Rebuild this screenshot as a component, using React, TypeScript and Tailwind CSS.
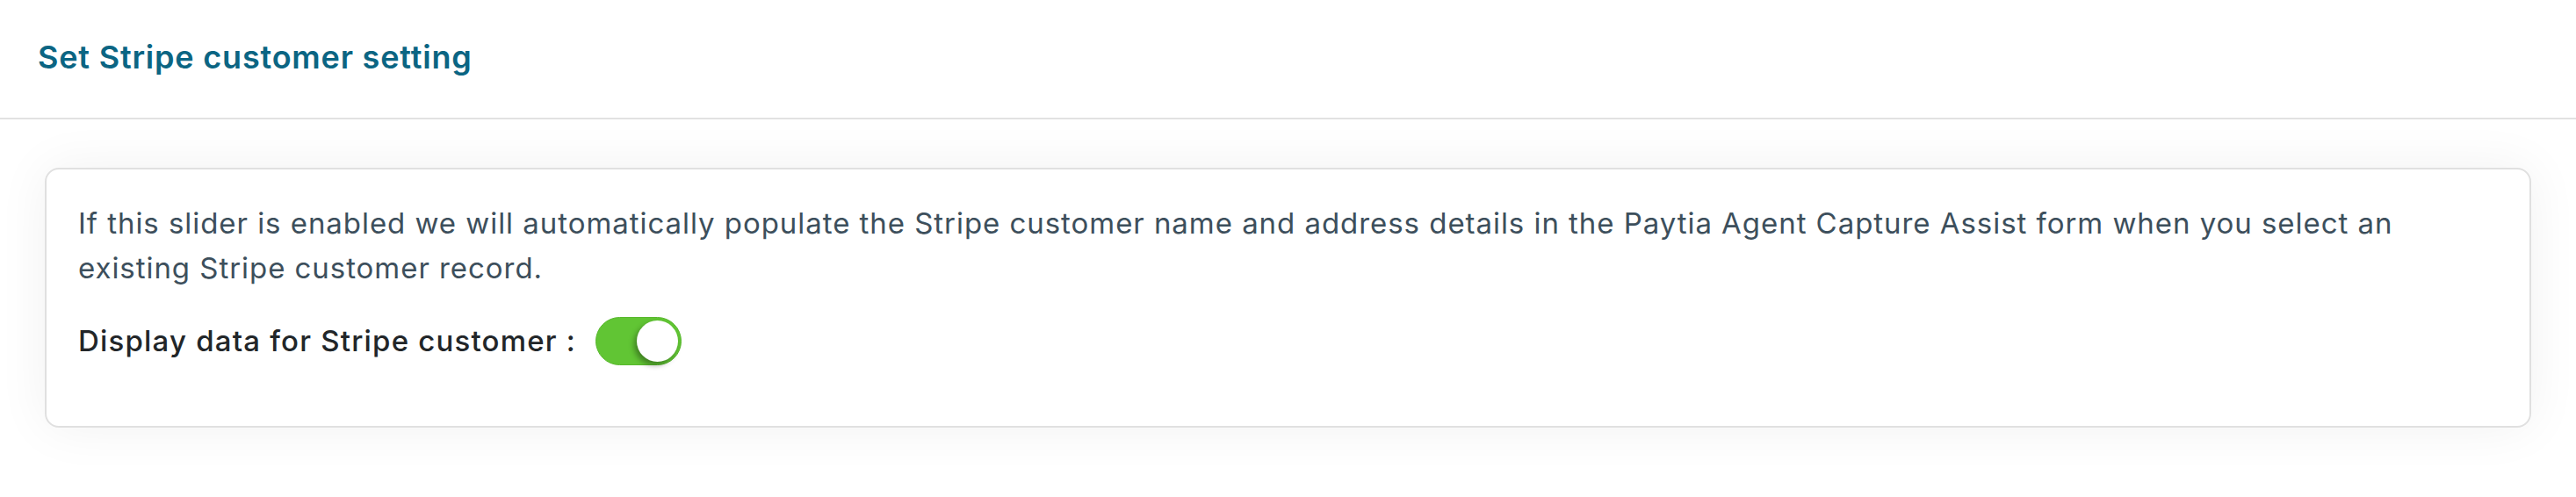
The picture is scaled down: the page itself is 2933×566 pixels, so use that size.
import React from 'react';

function Toggle() {
  return (
    <button
      type="button"
      aria-pressed="true"
      className="flex h-[55px] w-[98px] shrink-0 items-center justify-end rounded-full border border-[#58b82d] bg-[#61c534] pr-[3px]"
    >
      <span className="block h-[47px] w-[47px] rounded-full bg-white shadow-[-3px_4px_6px_rgba(0,0,0,0.35)]" />
    </button>
  );
}

export default function App() {
  return (
    <div className="min-h-screen bg-white font-['Inter',sans-serif]">
      <div className="flex h-[136px] items-center border-b-2 border-[#e2e2e2] px-[43px] pb-[4px]">
        <h1 className="text-[36px] font-semibold tracking-[0.8px] text-[#0b6583]">
          Set Stripe customer setting
        </h1>
      </div>
      <div className="px-[51px] pt-[55px] pb-[79px]">
        <div className="rounded-[16px] border-2 border-[#e0e0e0] bg-white px-[36px] pt-[36px] pb-[69px] shadow-[0_0_60px_rgba(0,0,0,0.06)]">
          <p className="text-[33px] leading-[51px] tracking-[0.95px] text-[#3d4f5c]">
            If this slider is enabled we will automatically populate the Stripe customer name and address details in the
            Paytia Agent Capture Assist form when you select an existing Stripe customer record.
          </p>
          <div className="mt-[30px] flex items-center gap-[22px]">
            <span className="text-[33px] font-medium tracking-[1.2px] text-[#222629]">
              Display data for Stripe customer :
            </span>
            <Toggle />
          </div>
        </div>
      </div>
    </div>
  );
}
